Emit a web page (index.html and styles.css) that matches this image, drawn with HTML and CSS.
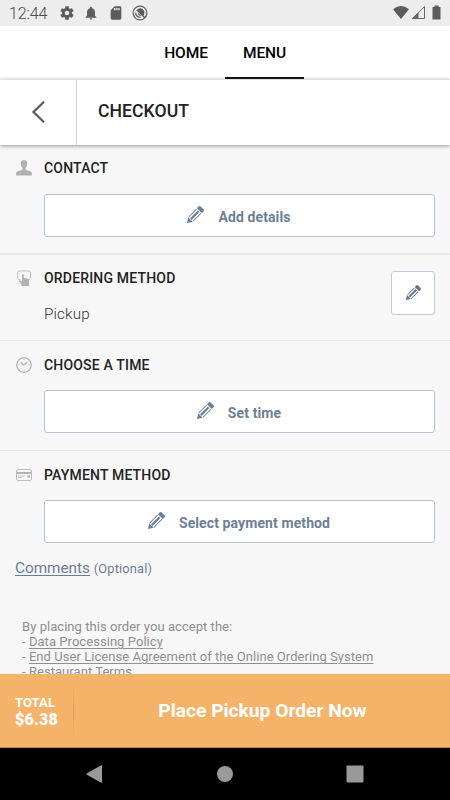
FILE: index.html
```html
<!DOCTYPE html>
<html lang="en">
<head>
<meta charset="utf-8">
<title>Checkout</title>
<link rel="stylesheet" href="styles.css">
</head>
<body>
<svg class="defs" width="0" height="0" aria-hidden="true">
  <symbol id="pencil" viewBox="0 0 18 18">
    <g transform="translate(1 17) rotate(-45)">
      <path d="M0 0 4.900-3.200V3.200ZM5.500-3.500H16.500V-2.500H5.500ZM5.500-1.100H16.500V1.100H5.500ZM5.500 2.500H16.500V3.500H5.500ZM17.500-3.500H19.800Q21.300-3.500 21.300-2V2Q21.300 3.500 19.800 3.500H17.500Z" fill="currentColor"/>
    </g>
  </symbol>
</svg>
<div class="screen">
  <div class="status">
    <span class="clock">12:44</span>
    <svg class="gear" width="16" height="16" viewBox="0 0 24 24"><path fill="#5c5c5c" fill-rule="evenodd" d="M19.4 13a7.800 7.800 0 0 0 0-2l2.200-1.700c.2-.1.200-.4.100-.6l-2-3.500c-.1-.2-.4-.3-.6-.2l-2.500 1a7.300 7.300 0 0 0-1.700-1L14.500 2.400c0-.2-.2-.4-.5-.4h-4c-.2 0-.5.200-.5.400L9.100 5a7.700 7.700 0 0 0-1.700 1l-2.500-1c-.2-.1-.5 0-.6.200l-2 3.500c-.1.200-.1.500.1.600L4.600 11a8 8 0 0 0 0 2l-2.200 1.700c-.2.100-.2.400-.1.600l2 3.500c.1.200.4.300.6.200l2.500-1c.5.400 1.100.7 1.700 1l.4 2.600c0 .2.300.4.500.4h4c.3 0 .5-.2.500-.4l.4-2.600a7 7 0 0 0 1.700-1l2.500 1c.2.100.5 0 .6-.2l2-3.500c.1-.2.100-.5-.1-.6ZM12 15.500a3.500 3.500 0 1 1 0-7 3.500 3.500 0 0 1 0 7Z"/></svg>
    <svg class="bell" width="16" height="16" viewBox="0 0 24 24"><path fill="#5c5c5c" d="M12 22c1.100 0 2-.9 2-2h-4c0 1.100.9 2 2 2Zm6-6v-5c0-3.100-1.600-5.600-4.500-6.300V4a1.500 1.500 0 0 0-3 0v.7C7.600 5.400 6 7.900 6 11v5l-2 2v1h16v-1Z"/></svg>
    <svg class="card-icon" width="16" height="16" viewBox="0 0 24 24"><path fill="#5c5c5c" fill-rule="evenodd" d="M18 2h-8L4 8v12c0 1.100.9 2 2 2h12c1.100 0 2-.9 2-2V4c0-1.100-.9-2-2-2ZM9 4.500h2V8H9Zm3.200 0h2V8h-2Zm3.200 0h2V8h-2Z"/></svg>
    <svg class="ring" width="16" height="16" viewBox="0 0 16 16" fill="none" stroke="#5c5c5c"><circle cx="8" cy="8" r="6.900" stroke-width="1.200"/><path stroke-width="1.200" d="M8.500 12.300A4.400 4.400 0 0 1 3.700 7.500"/><path fill="#5c5c5c" stroke="none" d="M4.300 5.500Q6.500 2.800 9.500 3.500 12.500 4.500 12.500 8 12.400 9.500 11.500 10.500L13.300 12.200 12.300 13.300 5.800 6.800Z"/><path stroke-width="1.100" d="M6.200 8.500 8.500 10.800"/></svg>
    <span class="spacer"></span>
    <svg class="signals" width="50" height="16" viewBox="0 0 50 16"><path fill="#5c5c5c" d="M1 4.200Q9-2 17 4.200L9 14Z"/><path fill="none" stroke="#666" d="M20.500 13.500 32.500 1.500V13.500Z"/><path fill="#666" d="M19.500 14 26.500 7V14Z"/><path fill="#5c5c5c" d="M40.500 2h2V.5h4V2h2v12.500h-8Z"/></svg>
  </div>
  <nav class="tabs">
    <a class="tab home">HOME</a>
    <a class="tab menu">MENU</a>
  </nav>
  <header class="header">
    <div class="back"><svg width="14" height="24" viewBox="0 0 14 24"><path d="M13 1.700 2.500 12 13 22.300" fill="none" stroke="#5d5d5d" stroke-width="2.300"/></svg></div>
    <h1>CHECKOUT</h1>
  </header>
  <main class="content">
    <section class="section contact">
      <div class="title">
        <svg width="16" height="16" viewBox="0 0 16 16"><path fill="#b1b1b1" d="M8 0C5.800 0 4.600 1.500 4.700 3.600 4.800 5.500 5.400 6.900 6.300 7.800V9.500C5.500 10.500 1 10.700.2 12.700L0 15.500H16L15.800 12.700C15 10.700 10.500 10.500 9.700 9.500V7.800C10.600 6.900 11.200 5.500 11.300 3.600 11.400 1.500 10.200 0 8 0Z"/></svg>
        <h2>CONTACT</h2>
      </div>
      <div class="button"><svg class="pencil"><use href="#pencil"/></svg><span>Add details</span></div>
    </section>
    <section class="section ordering">
      <div class="method">
        <div class="title">
          <svg width="16" height="16" viewBox="0 0 16 16"><path d="M4.500 9.800H3L1.500 8.300V2L2.500 1H13.500L14.500 2V8.300L13 9.800" fill="none" stroke="#c0c0c0"/><path fill="#b1b1b1" d="M6 4.500Q6.900 3.600 7.800 4.500V8L12.200 8.800Q13.200 9.100 13 10.300V15.900H5.300V14L2.700 11.200 3.700 10.300 6 11.500Z"/></svg>
          <h2>ORDERING METHOD</h2>
        </div>
        <p>Pickup</p>
      </div>
      <div class="edit"><svg class="pencil"><use href="#pencil"/></svg></div>
    </section>
    <section class="section time">
      <div class="title">
        <svg width="16" height="16" viewBox="0 0 16 16" fill="none" stroke="#b1b1b1"><circle cx="8" cy="8" r="7.300" stroke-width="1.200"/><path stroke-width="1.300" d="M5 5.200 7.700 8.100 11 5.600"/><path stroke-width=".8" d="M8 2v1.200M8 12.800V14M2 8h1.200M12.800 8H14M3.700 3.700l.6.6M12.300 3.700l-.6.6M3.700 12.300l.6-.6M12.300 12.300l-.6-.6"/></svg>
        <h2>CHOOSE A TIME</h2>
      </div>
      <div class="button"><svg class="pencil"><use href="#pencil"/></svg><span>Set time</span></div>
    </section>
    <section class="section payment">
      <div class="title">
        <svg width="16" height="16" viewBox="0 0 16 16"><rect x=".5" y="2.500" width="15" height="11" rx="1.500" fill="none" stroke="#bdbdbd"/><path fill="#b5b5b5" d="M1 5H15V7H1ZM2 8.500H9V9.300H2ZM2 10.300H6V11.100H2ZM11 8.500H14V10.500H11Z"/></svg>
        <h2>PAYMENT METHOD</h2>
      </div>
      <div class="button"><svg class="pencil"><use href="#pencil"/></svg><span>Select payment method</span></div>
    </section>
    <div class="comments"><a>Comments</a> <small>(Optional)</small></div>
    <div class="legal">
      <div>By placing this order you accept the:</div>
      <div>- <a>Data Processing Policy</a></div>
      <div>- <a>End User License Agreement of the Online Ordering System</a></div>
      <div>- <a>Restaurant Terms</a></div>
    </div>
  </main>
  <footer class="order">
    <div class="total"><span>TOTAL</span><strong>$6.38</strong></div>
    <div class="place"><span>Place Pickup Order Now</span></div>
  </footer>
  <div class="system">
    <svg width="18" height="18" viewBox="0 0 18 18"><path fill="#999" d="M15.200.3Q16 0 16 .8V17.200Q16 18 15.200 17.700L.5 9.500Q0 9 .5 8.500Z"/></svg>
    <svg width="18" height="18" viewBox="0 0 18 18"><circle cx="9" cy="9" r="8" fill="#999"/></svg>
    <svg width="18" height="18" viewBox="0 0 18 18"><rect x=".5" y=".5" width="17" height="17" rx="1" fill="#999"/></svg>
  </div>
</div>
</body>
</html>
```

FILE: styles.css
```css
* { box-sizing: border-box; }
body { margin: 0; font-family: Roboto, sans-serif; color: #222; }
h1, h2, p { margin: 0; }
svg { display: block; flex: none; }
.defs { position: absolute; }
.screen { width: 450px; height: 800px; display: flex; flex-direction: column; overflow: hidden; background: #f7f7f7; }
.status { height: 26px; flex: none; background: #ededed; display: flex; align-items: center; padding: 0 8px 0 9px; color: #4a4a4a; }
.clock { width: 50px; font-size: 16px; line-height: 26px; letter-spacing: -.1px; padding-top: 2px; font-weight: 300; }
.bell { margin-left: 8px; }
.card-icon { margin-left: 9px; }
.ring { margin-left: 8px; }
.spacer { flex: 1; }
.tabs { height: 53px; flex: none; display: flex; background: #fff; padding-left: 147px; }
.tab { width: 78px; text-align: center; font-size: 15.500px; font-weight: 500; line-height: 54px; color: #000; letter-spacing: -.1px; }
.menu { width: 79px; border-bottom: 2px solid #111; }
.header { height: 66px; flex: none; display: flex; background: #fff; border-top: 1px solid #e1e1e1; box-shadow: 0 1px 4px rgba(0,0,0,.4); position: relative; }
.back { width: 77px; border-right: 1px solid #d2d2d2; display: flex; align-items: center; justify-content: center; padding-bottom: 2px; }
h1 { margin-left: 21px; font-size: 17.6px; line-height: 63px; font-weight: 500; letter-spacing: .05px; }
.content { flex: 1; min-height: 0; overflow: hidden; }
.section { padding: 0 16px; border-bottom: 2px solid #e9e9e9; }
.title { display: flex; align-items: center; gap: 12px; height: 16px; }
h2 { font-size: 14px; font-weight: 500; line-height: 16px; letter-spacing: .18px; }
.button { height: 43px; margin: 18px 0 0 28px; width: 391px; border: 1px solid #b7c3d4; border-radius: 3px; background: #fff; display: flex; justify-content: center; align-items: center; gap: 14px; color: #6d7f96; font-size: 14px; font-weight: 700; letter-spacing: .1px; padding-right: 2px; }
.button span { padding-top: 3px; }
.pencil { width: 18px; height: 18px; }
.button .pencil { margin-bottom: 2px; }
.contact { height: 110px; padding-top: 15px; }
.ordering { height: 86px; display: flex; justify-content: space-between; padding-top: 15px; border-width: 1px; }
.ordering p { margin: 18px 0 0 28px; font-size: 15.2px; line-height: 20px; color: #333; letter-spacing: .15px; font-weight: 300; }
.edit { width: 44px; height: 44px; margin: 1px -1px 0 0; border: 1px solid #c1cbd9; border-radius: 3px; background: #fff; display: flex; align-items: center; justify-content: center; color: #63748b; padding-right: 1px; }
.edit .pencil { width: 16px; height: 16px; }
.time { height: 110px; padding-top: 15.500px; border-width: 1px; }
.time .button { margin-top: 17.500px; }
.payment { height: 94px; padding-top: 16px; border: 0; }
.payment .button { margin-top: 17px; }
.comments { padding: 13px 15px 0; height: 74px; line-height: 20px; font-size: 15.3px; color: #6b7d94; }
.comments a, .legal a { text-decoration: underline; text-underline-offset: 2px; text-decoration-thickness: 1px; }
.comments small { font-size: 12.8px; letter-spacing: .18px; }
.legal { padding-left: 22px; font-size: 13px; line-height: 15px; color: #8f8f8f; white-space: nowrap; letter-spacing: .05px; }
.order { height: 74px; flex: none; background: #f5b36a; border-bottom: 1px solid #bd874e; color: #fff; display: flex; align-items: center; font-weight: 700; }
.total { width: 74px; height: 56px; padding: 2px 0 0 15px; display: flex; flex-direction: column; justify-content: center; border-right: 1px solid; border-image: linear-gradient(transparent, #dda062, transparent) 1; font-size: 13px; line-height: 16px; letter-spacing: .1px; }
.total strong { font-size: 16px; line-height: 17px; letter-spacing: .2px; }
.place { flex: 1; text-align: center; font-size: 19.200px; padding-left: 1px; }
.system { height: 52px; flex: none; background: #000; display: flex; align-items: center; gap: 112px; padding-left: 85.500px; }
```
